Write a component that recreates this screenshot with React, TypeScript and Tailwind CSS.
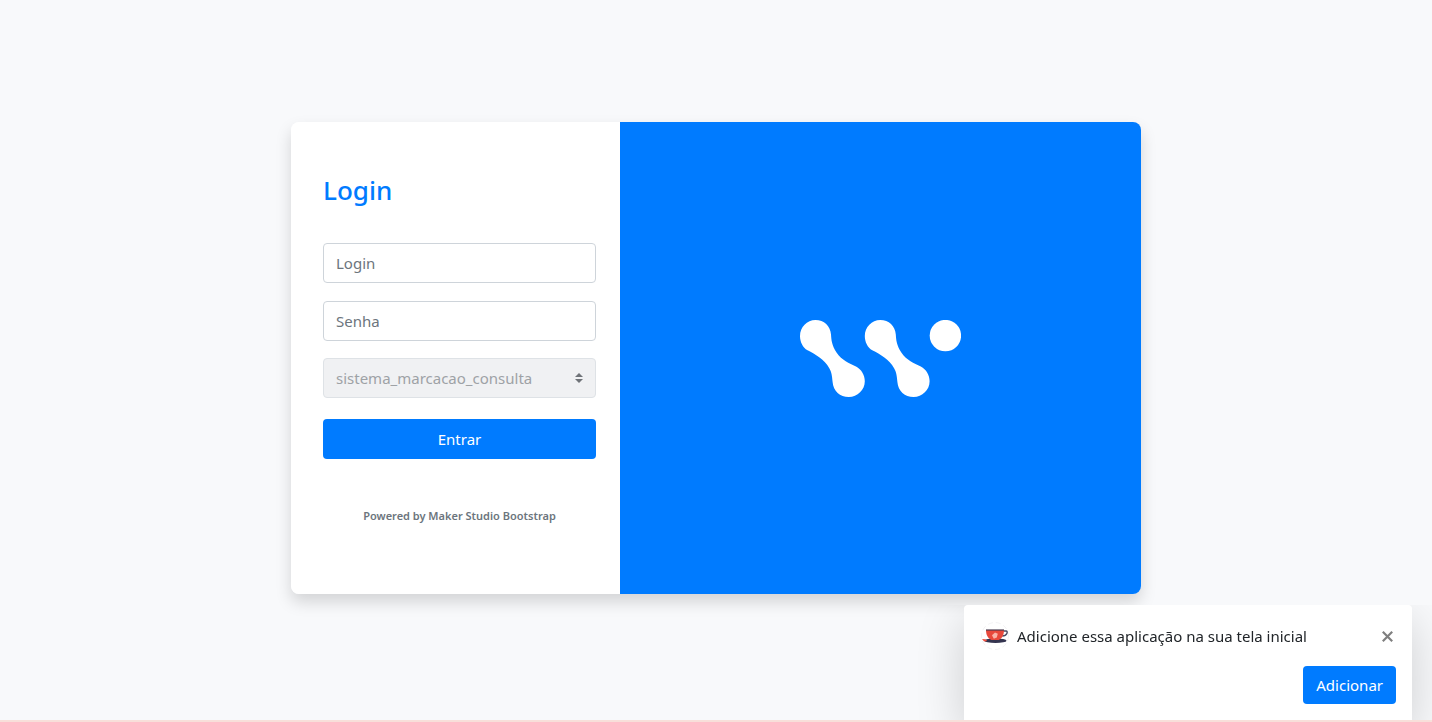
import { useState, type FormEvent } from 'react';

const field =
  'block h-10 w-full rounded border border-[#ced4da] bg-white px-3 text-[15px] leading-6 text-[#495057] placeholder:text-[#6c757d] focus:border-[#80bdff] focus:outline-none';

const LINK =
  'M15.5 0C24 0 30.5 6 31 14.5C31.4 20 31.7 25 36.7 32.7C42 40.500 49 43 56 46.500C61.500 49.500 64.800 55 64.800 61.300C64.800 70 57.500 77 48.800 77C40 77 33.300 71 32.600 62C32 55.500 31.500 52 29.300 48.300C24.500 39.500 15.500 34.500 7.500 30.300C2.800 27.500 0 22 0 16C0 7.200 7 0 15.500 0Z';

const Logo = () => (
  <svg width="161" height="77" viewBox="0 0 161 77" fill="#fff" role="img" aria-label="Logo">
    <path d={LINK} />
    <path d={LINK} transform="translate(64.8 0)" />
    <circle cx="145.4" cy="15.6" r="15.7" />
  </svg>
);

const CoffeeIcon = () => (
  <svg width="28" height="28" viewBox="0 0 28 28" aria-hidden="true">
    <circle cx="14" cy="14" r="13.5" fill="#fff" stroke="#e9e9ec" strokeWidth=".6" strokeDasharray="5 3" />
    <ellipse cx="14.5" cy="18.7" rx="11" ry="2.3" fill="#34344f" />
    <path d="M1 17l3.4.3 1.8 1.6-3 .6z" fill="#f0503f" />
    <path d="M22 9h3.2c1.800 0 1.400 4.800-4 5" fill="none" stroke="#4a4a63" strokeWidth="1.4" />
    <path d="M5 8h18c0 5-2 8.600-5.200 10h-7.400C7 16.600 5 13 5 8z" fill="#e8483b" />
    <path d="M5 8h18" stroke="#4a3d50" strokeWidth="1.2" />
    <path d="M11 13.300l3-2.800 2.800 1.300-1 3.600-3 1.400z" fill="#f9b3a8" />
  </svg>
);

const LoginForm = () => {
  const [login, setLogin] = useState('');
  const [password, setPassword] = useState('');

  const onSubmit = (e: FormEvent) => e.preventDefault();

  return (
    <form onSubmit={onSubmit} className="w-full bg-white pt-[50px] pr-6 pb-[69px] pl-8 md:w-[329px]">
      <h1 className="mb-[35px] text-[26px] leading-9 font-medium text-[#007bff]">Login</h1>

      <input
        type="text"
        aria-label="Login"
        placeholder="Login"
        value={login}
        onChange={e => setLogin(e.target.value)}
        className={field}
      />

      <input
        type="password"
        aria-label="Senha"
        placeholder="Senha"
        value={password}
        onChange={e => setPassword(e.target.value)}
        className={`${field} mt-[18px]`}
      />

      <div className="relative mt-[17px]">
        <select
          disabled
          aria-label="Sistema"
          className="block h-10 w-full appearance-none rounded border border-[#dee2e6] bg-[#f0f1f3] pr-7 pl-3 text-[15px] leading-6 text-[#9ea2a6] opacity-100"
        >
          <option>sistema_marcacao_consulta</option>
        </select>
        <svg
          width="8"
          height="10"
          viewBox="0 0 4 5"
          fill="#6f7378"
          aria-hidden="true"
          className="pointer-events-none absolute inset-y-0 right-[13px] my-auto"
        >
          <path d="M2 0L0 2h4zm0 5L0 3h4z" />
        </svg>
      </div>

      <button
        type="submit"
        className="mt-[21px] block h-10 w-full rounded bg-[#007bff] text-[15px] leading-6 text-white hover:bg-[#0069d9]"
      >
        Entrar
      </button>

      <p className="mt-12 text-center text-[11px] leading-[18px] font-semibold text-[#6c757d]">
        Powered by Maker Studio Bootstrap
      </p>
    </form>
  );
};

// Install prompt docked to the bottom of the window
const InstallToast = ({ onClose }: { onClose: () => void }) => (
  <div className="pointer-events-none fixed inset-x-0 bottom-0.5 flex justify-end overflow-hidden px-5">
    <div className="pointer-events-auto w-full max-w-[448px] rounded-t bg-white pt-[17px] pr-4 pb-4 pl-[17px] shadow-[0_16px_48px_rgba(0,0,0,0.175)]">
      <div className="flex items-center">
        <CoffeeIcon />
        <p className="ml-2 flex-1 text-[15px] leading-7 text-[#212529]">
          Adicione essa aplicação na sua tela inicial
        </p>
        <button type="button" onClick={onClose} aria-label="Fechar" className="p-[3px] text-[#7f7f7f] hover:text-black">
          <svg width="11" height="11" viewBox="0 0 11 11" stroke="currentColor" strokeWidth="2.2" aria-hidden="true">
            <path d="M.8.8l9.400 9.400M10.200.8L.8 10.200" />
          </svg>
        </button>
      </div>
      <div className="mt-4 flex justify-end">
        <button
          type="button"
          onClick={onClose}
          className="h-[38px] rounded bg-[#007bff] px-[13px] text-[15px] leading-6 text-white hover:bg-[#0069d9]"
        >
          Adicionar
        </button>
      </div>
    </div>
  </div>
);

const App = () => {
  const [showToast, setShowToast] = useState(true);

  return (
    <div className="flex min-h-screen flex-col border-b-2 border-[#f8dfda] bg-[#f8f9fb] font-['Noto_Sans','Open_Sans',sans-serif]">
      <main className="flex flex-1 items-center justify-center px-4 pb-1">
        <div className="flex w-full max-w-[850px] flex-col overflow-hidden rounded-lg shadow-[0_8px_16px_rgba(0,0,0,0.15)] md:flex-row">
          <LoginForm />
          <div className="flex min-h-48 flex-1 items-center justify-center bg-[#007bff]">
            <Logo />
          </div>
        </div>
      </main>
      {showToast && <InstallToast onClose={() => setShowToast(false)} />}
    </div>
  );
};

export default App;
